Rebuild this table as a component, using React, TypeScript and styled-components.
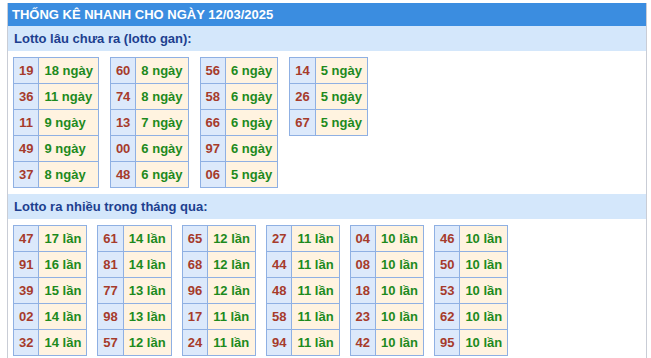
import * as React from 'react'
import styled, { createGlobalStyle } from 'styled-components'

const GlobalStyle = createGlobalStyle`
	body {
		margin: 0;
		background: #ffffff;
		font-family: Arial, "Liberation Sans", sans-serif;
	}
`

const Box = styled.div`
	width: 638px;
	margin: 3px 0 0 7px;
	border-left: 1px solid #c9cdd6;
	border-right: 1px solid #c9cdd6;
`
const Title = styled.div`
	height: 23px;
	line-height: 23px;
	padding-left: 4px;
	background: #3b8de0;
	color: #ffffff;
	font-size: 13px;
	font-weight: bold;
`
const SubTitle = styled.div`
	height: 25px;
	line-height: 25px;
	padding-left: 6px;
	background: #d4e7fb;
	color: #1d3f8f;
	font-size: 13px;
	font-weight: bold;
`
const Tables = styled.div<{ $gap: number }>`
	display: flex;
	align-items: flex-start;
	gap: ${(p) => p.$gap}px;
	padding: 6px 0 6px 5px;
`
const Table = styled.table`
	border-collapse: collapse;
	font-size: 13px;
	font-weight: bold;
`
const NumCell = styled.td`
	height: 25px;
	padding: 0 5px;
	border: 1px solid #8fb0e3;
	background: #dce9fb;
	color: #a63b2b;
	text-align: center;
`
const ValueCell = styled.td`
	height: 25px;
	padding: 0 5px;
	border: 1px solid #8fb0e3;
	background: #fff3e0;
	color: #1d8a1d;
	white-space: nowrap;
`

type Row = [string, string]

const gan: Row[][] = [
	[['19', '18 ngày'], ['36', '11 ngày'], ['11', '9 ngày'], ['49', '9 ngày'], ['37', '8 ngày']],
	[['60', '8 ngày'], ['74', '8 ngày'], ['13', '7 ngày'], ['00', '6 ngày'], ['48', '6 ngày']],
	[['56', '6 ngày'], ['58', '6 ngày'], ['66', '6 ngày'], ['97', '6 ngày'], ['06', '5 ngày']],
	[['14', '5 ngày'], ['26', '5 ngày'], ['67', '5 ngày']],
]

const nhieu: Row[][] = [
	[['47', '17 lần'], ['91', '16 lần'], ['39', '15 lần'], ['02', '14 lần'], ['32', '14 lần']],
	[['61', '14 lần'], ['81', '14 lần'], ['77', '13 lần'], ['98', '13 lần'], ['57', '12 lần']],
	[['65', '12 lần'], ['68', '12 lần'], ['96', '12 lần'], ['17', '11 lần'], ['24', '11 lần']],
	[['27', '11 lần'], ['44', '11 lần'], ['48', '11 lần'], ['58', '11 lần'], ['94', '11 lần']],
	[['04', '10 lần'], ['08', '10 lần'], ['18', '10 lần'], ['23', '10 lần'], ['42', '10 lần']],
	[['46', '10 lần'], ['50', '10 lần'], ['53', '10 lần'], ['62', '10 lần'], ['95', '10 lần']],
]

const StatTable = ({ rows }: { rows: Row[] }) => (
	<Table>
		<tbody>
			{rows.map(([num, value]) => (
				<tr key={num}>
					<NumCell>{num}</NumCell>
					<ValueCell>{value}</ValueCell>
				</tr>
			))}
		</tbody>
	</Table>
)

export default function App() {
	return (
		<>
			<GlobalStyle />
			<Box>
				<Title>THỐNG KÊ NHANH CHO NGÀY 12/03/2025</Title>
				<SubTitle>Lotto lâu chưa ra (lotto gan):</SubTitle>
				<Tables $gap={11}>
					{gan.map((rows, i) => (
						<StatTable key={i} rows={rows} />
					))}
				</Tables>
				<SubTitle>Lotto ra nhiều trong tháng qua:</SubTitle>
				<Tables $gap={10}>
					{nhieu.map((rows, i) => (
						<StatTable key={i} rows={rows} />
					))}
				</Tables>
			</Box>
		</>
	)
}
